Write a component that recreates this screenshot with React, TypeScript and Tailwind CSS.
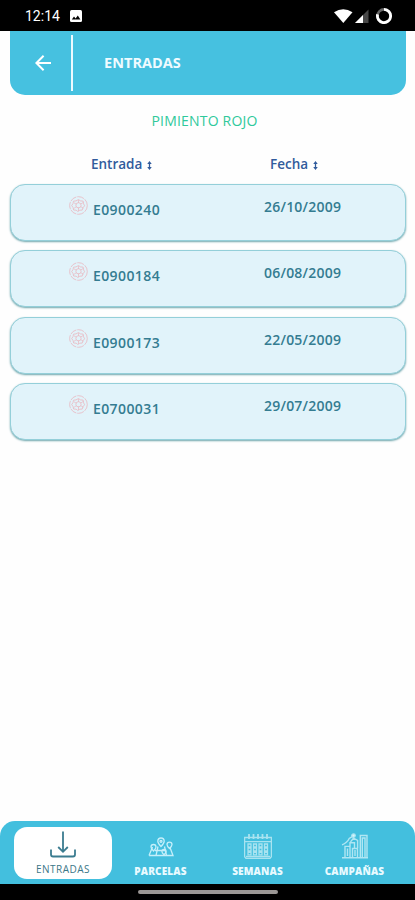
import { ReactNode } from 'react';

const entries = [
  { id: 'E0900240', date: '26/10/2009' },
  { id: 'E0900184', date: '06/08/2009' },
  { id: 'E0900173', date: '22/05/2009' },
  { id: 'E0700031', date: '29/07/2009' },
];

function StatusBar() {
  return (
    <div className="flex h-[31px] shrink-0 items-center bg-black pl-[25px] pr-[23px] text-white">
      <span className="w-[36px] font-[Roboto] text-[14px] leading-none">12:14</span>
      <svg className="ml-[9px] h-[12px] w-[12px]" viewBox="0 0 12 12">
        <rect width="12" height="12" rx="1.5" fill="#fff" />
        <path d="M1.8 9.5 4 6.5l1.6 2 2.2-3 2.6 4z" fill="#000" />
      </svg>
      <svg className="ml-auto h-[16px] w-[58px]" viewBox="0 0 58 16">
        <path d="M0 4.3Q9.3-1.8 18.5 4.3L9.3 15z" fill="#fff" />
        <path d="M21 15 34.5 1.5V15z" fill="#484848" />
        <path d="M21 15 29 7v8z" fill="#fff" />
        <circle cx="50" cy="8" r="6.6" fill="none" stroke="#666" strokeWidth="2.6" />
        <path d="M50 1.4A6.6 6.6 0 1 1 43.6 6.4" fill="none" stroke="#fff" strokeWidth="2.8" />
      </svg>
    </div>
  );
}

function Header() {
  return (
    <header className="mx-[10px] mr-[9px] flex h-[64px] shrink-0 items-center rounded-b-[15px] bg-[#46c1e0]">
      <svg className="ml-[25px] h-[16px] w-[16px]" viewBox="0 0 16 16" fill="none" stroke="#fff" strokeWidth="2">
        <path d="M16 8H1.5M8.6.8 1.4 8l7.2 7.2" />
      </svg>
      <div className="ml-[20px] h-[56px] w-[2px] bg-[#eefaff]" />
      <h1 className="ml-[31px] text-[14.5px] font-bold leading-none tracking-[0.03px] text-[#effbff]">ENTRADAS</h1>
    </header>
  );
}

function SortIcon() {
  return (
    <svg className="mt-[1px] h-[9px] w-[5px]" viewBox="0 0 5 10" fill="#315b9c">
      <path d="M2.5 0 5 3.2H3.2v3.6H5L2.5 10 0 6.8h1.8V3.2H0z" />
    </svg>
  );
}

// round pepper seal shown before each entry number
function SealIcon() {
  return (
    <svg className="h-[19px] w-[19px]" viewBox="0 0 19 19" fill="none" stroke="#eab6bf" strokeWidth="0.8">
      <circle cx="9.5" cy="9.5" r="8.8" strokeDasharray="7 1" />
      <path d="m9.5 3.5 2 1.4 2.6.2.5 2.7 1 2-1.7 2-.7 2.3-2.4.1-1.9 1.3-1.8-1.3-2.5-.2-.5-2.4-1.4-2 1.3-2 .5-2.4 2.5-.3z" />
      <circle cx="9.5" cy="9.3" r="2.6" />
      <path d="M9.5 4v3M9.5 11.5v3.5M5 6.8l2.2 1.3M12 10.8l2.4 1.4M4.8 12.4l2.3-1.5M12 7.8l2.3-1.3" strokeWidth="0.7" />
    </svg>
  );
}

function EntryCard({ id, date }: { id: string; date: string }) {
  return (
    <div className="flex h-[57px] rounded-[15px] border border-[#94cfd9] bg-[#e1f3fa] text-[14px] font-semibold leading-none text-[#347c91] shadow-[0_1px_2px_#6fa6ad]">
      <div className="flex w-[253px] pl-[58px] pt-[11px]">
        <SealIcon />
        <span className="ml-[5px] mt-[7px] tracking-[0.4px]">{id}</span>
      </div>
      <span className="mt-[15px] tracking-[0.22px]">{date}</span>
    </div>
  );
}

function ParcelIcon() {
  return (
    <svg className="h-[26px] w-[28px]" viewBox="0 0 28 26" fill="none" stroke="#c5effa" strokeWidth="1.3">
      <path d="M2 22.5 5.5 14M22.8 14l3.2 8.5H2M8 17.5h11M11 13.5l-2 9M17.5 13.5l2 9" />
      <path d="M14 13.5c-2-2-3.2-3.6-3.2-5.3a3.2 3.2 0 0 1 6.4 0c0 1.7-1.2 3.3-3.2 5.3zM6.5 18c-1.7-1.7-2.5-2.8-2.5-4a2.5 2.5 0 0 1 5 0c0 1.2-.8 2.3-2.5 4zM22.5 15.6c-1.7-1.7-2.5-2.8-2.5-4a2.5 2.5 0 0 1 5 0c0 1.2-.8 2.3-2.5 4zM17 21.8c-1.5-1.4-2.1-2.2-2.1-3.2a2.1 2.1 0 0 1 4.2 0c0 1-.6 1.8-2.1 3.2z" />
      <circle cx="14" cy="8.3" r="1" />
    </svg>
  );
}

function CalendarIcon() {
  return (
    <svg className="h-[26px] w-[28px]" viewBox="0 0 28 26" fill="none" stroke="#a9e3f0" strokeWidth="1.3">
      <path d="M.6 4.5h26.8v19.2l-1.4 1.7H2L.6 23.7zM.6 8.6h26.8M2 23.5h24" />
      <path d="M5 1v5M9.5 1v5M14 1v5M18.5 1v5M23 1v5" strokeWidth="1.8" />
      <path d="M4 11h3v2.8H4zM9.5 11h3v2.8h-3zM15 11h3v2.8h-3zM20.5 11h3v2.8h-3zM4 15.2h3V18H4zM9.5 15.2h3V18h-3zM15 15.2h3V18h-3zM20.5 15.2h3V18h-3zM4 19.4h3v2.4H4zM9.5 19.4h3v2.4h-3zM15 19.4h3v2.4h-3zM20.5 19.4h3v2.4h-3z" />
    </svg>
  );
}

function CampaignIcon() {
  return (
    <svg className="h-[26px] w-[28px]" viewBox="0 0 28 26" fill="none" stroke="#b0e6f3" strokeWidth="1.4">
      <path d="M1 24.8h26M4 24.5V13.4h5v11.1M11.5 24.5V15.5h5v9M19.3 24.5V2.5h6.7v22M21.3 24.5V5h2.7v19.5M6.5 23v-7.5M14 23v-6" />
      <path d="M1 11.8C4.7 10.5 7 8 8.2 5.5L12 3.2M16.6 15V7.4L12.5 5.2l-3 3.7M9 13V9.7h4.5v5.8" />
      <circle cx="12.5" cy="2.6" r="1.7" fill="#d7f5fb" />
    </svg>
  );
}

function NavItem({ label, children }: { label: string; children: ReactNode }) {
  return (
    <div className="flex w-[97px] flex-col items-center pt-[12px] text-[#e9faff]">
      {children}
      <span className="mt-[7px] text-[10px] font-extrabold leading-none tracking-[0.15px]">{label}</span>
    </div>
  );
}

function BottomNav() {
  return (
    <nav className="mt-auto flex h-[63px] shrink-0 rounded-t-[15px] bg-[#43bfde]">
      <div className="ml-[14px] mt-[6px] flex h-[52px] w-[98px] flex-col items-center rounded-[13px] bg-white pt-[4px] text-[#3c7788]">
        <svg className="h-[27px] w-[26px]" viewBox="0 0 26 27" fill="none" stroke="#3b7c90" strokeWidth="1.8">
          <path d="M13 .5v20M8.2 16l4.8 4.8 4.8-4.8M1 18.5v5q0 2 2 2h20q2 0 2-2v-5" />
        </svg>
        <span className="mt-[6px] text-[10px] font-medium leading-none tracking-[0.5px]">ENTRADAS</span>
      </div>
      <NavItem label="PARCELAS"><ParcelIcon /></NavItem>
      <NavItem label="SEMANAS"><CalendarIcon /></NavItem>
      <NavItem label="CAMPAÑAS"><CampaignIcon /></NavItem>
      <div className="w-[12px]" />
    </nav>
  );
}

export default function App() {
  return (
    <div className="flex h-[900px] w-[415px] flex-col overflow-hidden bg-[#fefefe] font-['Open_Sans',sans-serif]">
      <StatusBar />
      <Header />
      <h2 className="mt-[19px] text-center text-[14px] leading-none tracking-[0.2px] text-[#2fc99b]">
        <span className="mr-[6px]">PIMIENTO ROJO</span>
      </h2>
      <div className="mt-[30px] flex h-[14px] pl-[91px] text-[13.5px] font-semibold leading-none text-[#315b9c]">
        <div className="flex w-[179px] items-center gap-[5px]">Entrada <SortIcon /></div>
        <div className="flex items-center gap-[5px]">Fecha <SortIcon /></div>
      </div>
      <main className="ml-[10px] mr-[9px] mt-[12px] flex flex-col gap-[9.3px]">
        {entries.map((entry) => (
          <EntryCard key={entry.id} id={entry.id} date={entry.date} />
        ))}
      </main>
      <BottomNav />
      <div className="flex h-[16px] shrink-0 justify-center bg-black pt-[6px]">
        <div className="h-[4px] w-[140px] rounded-full bg-[#9b9795]" />
      </div>
    </div>
  );
}
